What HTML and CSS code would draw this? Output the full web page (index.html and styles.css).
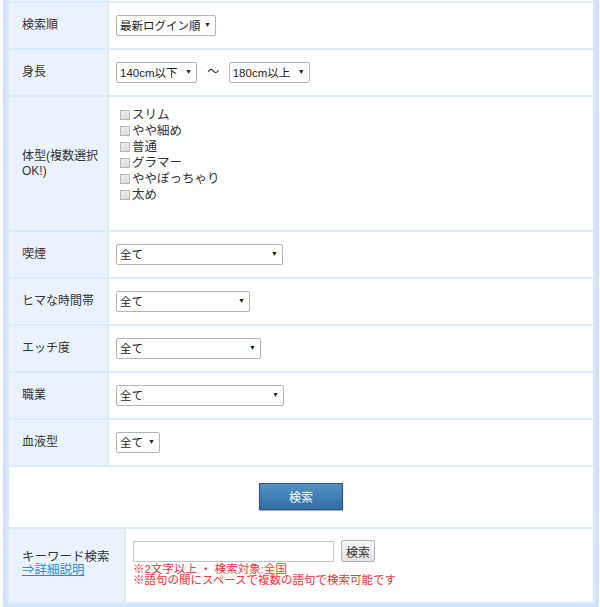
FILE: index.html
```html
<!DOCTYPE html>
<html lang="ja">
<head>
  <meta charset="UTF-8">
  <title>検索</title>
  <link rel="stylesheet" href="styles.css">
</head>
<body>

<div class="box">
  <table class="search">
    <tr class="stub">
      <th></th>
      <td></td>
    </tr>
    <tr>
      <th>検索順</th>
      <td>
        <span class="sel w-sort"><select><option>最新ログイン順</option></select></span>
      </td>
    </tr>
    <tr>
      <th>身長</th>
      <td>
        <span class="sel w-height"><select><option>140cm以下</option></select></span>
        <span class="tilde">～</span>
        <span class="sel w-height"><select><option>180cm以上</option></select></span>
      </td>
    </tr>
    <tr>
      <th>体型(複数選択OK!)</th>
      <td class="checks">
        <label><input type="checkbox">スリム</label>
        <label><input type="checkbox">やや細め</label>
        <label><input type="checkbox">普通</label>
        <label><input type="checkbox">グラマー</label>
        <label><input type="checkbox">ややぽっちゃり</label>
        <label><input type="checkbox">太め</label>
      </td>
    </tr>
    <tr>
      <th>喫煙</th>
      <td>
        <span class="sel w-smoke"><select><option>全て</option></select></span>
      </td>
    </tr>
    <tr>
      <th>ヒマな時間帯</th>
      <td>
        <span class="sel w-time"><select><option>全て</option></select></span>
      </td>
    </tr>
    <tr>
      <th>エッチ度</th>
      <td>
        <span class="sel w-ecchi"><select><option>全て</option></select></span>
      </td>
    </tr>
    <tr>
      <th>職業</th>
      <td>
        <span class="sel w-job"><select><option>全て</option></select></span>
      </td>
    </tr>
    <tr>
      <th>血液型</th>
      <td>
        <span class="sel w-blood"><select><option>全て</option></select></span>
      </td>
    </tr>
    <tr>
      <td colspan="2" class="submit">
        <button class="btn-search">検索</button>
      </td>
    </tr>
  </table>

  <table class="keyword">
    <tr>
      <th>
        キーワード検索<br>
        <a href="javascript:void(0)">⇒詳細説明</a>
      </th>
      <td>
        <div class="kw-line">
          <input type="text" class="kw-input">
          <button class="kw-btn">検索</button>
        </div>
        <p class="note">※2文字以上 ・ 検索対象:全国<br>※語句の間にスペースで複数の語句で検索可能です</p>
      </td>
    </tr>
  </table>
</div>

</body>
</html>
```

FILE: styles.css
```css
* {
  margin: 0;
  padding: 0;
}

body {
  font: 12px/1.2 "Liberation Sans", "Noto Sans CJK JP", sans-serif;
  color: #333;
  background: #fff;
}

.box {
  width: 588px;
  margin-left: 3px;
  border: 4px solid #cfe4fa;
  border-top: none;
}

table {
  width: 100%;
  border-collapse: collapse;
}

th,
td {
  border: 2px solid #dcebfb;
}

th {
  background-color: #eaf3fd;
  font-weight: normal;
  text-align: left;
  padding: 0 6px 0 13px;
  vertical-align: middle;
}

.search th {
  width: 79px;
}

.search td {
  padding: 12px 0 12px 7px;
}

.search .stub th,
.search .stub td {
  height: 1px;
  padding: 0;
  border-top: none;
}

/* select */
.sel {
  display: inline-block;
  position: relative;
  height: 21px;
  box-sizing: border-box;
  border: 1px solid #b4b4b4;
  border-radius: 2px;
  background: #fff;
  vertical-align: middle;
}

.sel select {
  appearance: none;
  -webkit-appearance: none;
  border: none;
  background: transparent;
  width: 100%;
  height: 19px;
  padding: 0 10px 0 3px;
  font: 11.5px "Liberation Sans", "Noto Sans CJK JP", sans-serif;
  color: #222;
  outline: none;
}

.sel::after {
  content: "▼";
  position: absolute;
  right: 4px;
  top: 5px;
  font-size: 7px;
  line-height: 8px;
  color: #222;
  pointer-events: none;
}

.w-sort { width: 100px; }
.w-height { width: 81px; }
.w-smoke { width: 167px; }
.w-time { width: 134px; }
.w-ecchi { width: 145px; }
.w-job { width: 168px; }
.w-blood { width: 44px; }

.tilde {
  display: inline-block;
  margin: 0 6px 0 7px;
  vertical-align: middle;
}

/* checkbox */
.search td.checks {
  padding: 10px 0 27px 10px;
}

.checks label {
  display: block;
  font-size: 12.5px;
  line-height: 16px;
  color: #333;
}

.checks input {
  appearance: none;
  -webkit-appearance: none;
  width: 10px;
  height: 10px;
  border: 1px solid #b9b9b9;
  background: linear-gradient(#eee, #ddd);
  margin: 0 2px 0 1px;
  vertical-align: -1px;
}

/* search button */
.search td.submit {
  padding: 16px 0 17px;
  text-align: center;
}

.btn-search {
  width: 84px;
  height: 27px;
  border: 1px solid #2c4f8d;
  background: linear-gradient(#5592c4, #2f6ea3);
  color: #fff;
  font: 12px "Noto Sans CJK JP", sans-serif;
  box-shadow: 0 1px 1px rgba(0, 0, 0, .3);
}

/* keyword */
.keyword th,
.keyword td {
  border-top: none;
}

.keyword th {
  width: 96px;
  padding: 4px 6px 8px 13px;
  font-size: 12.5px;
  line-height: 13px;
}

.keyword a {
  color: #2b8ccc;
  text-decoration: underline;
}

.keyword td {
  padding: 11px 0 16px 7px;
}

.kw-line {
  display: flex;
  align-items: center;
  gap: 7px;
}

.kw-input {
  width: 201px;
  height: 21px;
  box-sizing: border-box;
  border: 1px solid #c4c4c4;
}

.kw-btn {
  width: 34px;
  height: 22px;
  border: 1px solid #b3b3b3;
  border-radius: 2px;
  background: linear-gradient(#f6f6f6, #e2e2e2);
  font: 12px "Noto Sans CJK JP", sans-serif;
  color: #333;
}

.note {
  margin-top: 2px;
  color: #f33;
  font-size: 11.5px;
  line-height: 11px;
}
```
